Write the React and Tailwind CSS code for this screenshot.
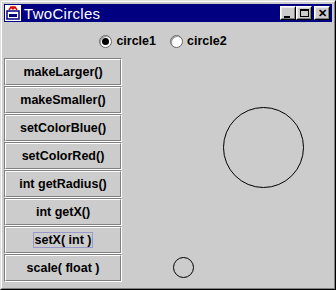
import React from "react";

const labels = [
  "makeLarger()",
  "makeSmaller()",
  "setColorBlue()",
  "setColorRed()",
  "int getRadius()",
  "int getX()",
  "setX( int )",
  "scale( float )",
];

// classic raised bevel, used for the title bar buttons
function Bevel({ children, className = "" }) {
  return (
    <div className={`border border-t-white border-l-white border-r-black border-b-black ${className}`}>
      <div className="h-full w-full border border-t-[#e8e8e8] border-l-[#e8e8e8] border-r-[#808080] border-b-[#808080] bg-[#cccccc] flex items-center justify-center">
        {children}
      </div>
    </div>
  );
}

// etched border like the Swing buttons
function Etched({ children, className = "" }) {
  return (
    <div className={`border border-t-[#808080] border-l-[#808080] border-r-white border-b-white ${className}`}>
      <div className="h-full w-full border border-t-white border-l-white border-r-[#808080] border-b-[#808080] bg-[#cccccc] flex items-center justify-center">
        {children}
      </div>
    </div>
  );
}

function Radio({ on, label }) {
  return (
    <div className="flex items-center gap-[4px]">
      <div className="w-[13px] h-[13px] rounded-full border border-[#666] bg-white flex items-center justify-center shadow-[inset_1px_1px_0_#999]">
        {on && <div className="w-[7px] h-[7px] rounded-full bg-black" />}
      </div>
      <span className="text-[12.5px] font-bold text-black">{label}</span>
    </div>
  );
}

export default function App() {
  return (
    <div
      className="w-[336px] h-[290px] bg-[#cccccc] border-t border-l border-t-[#e0e0e0] border-l-[#e0e0e0] border-r border-b border-r-black border-b-black"
      style={{ fontFamily: '"Liberation Sans", Arial, sans-serif' }}
    >
      <div className="h-full w-full border border-t-white border-l-white border-r-[#808080] border-b-[#808080] p-[2px] flex flex-col">
        {/* title bar */}
        <div className="h-[18px] bg-[#000080] flex items-center pl-[1px] pr-[2px] shrink-0">
          <svg width="16" height="16" viewBox="0 0 16 16" className="shrink-0">
            <rect x="0" y="0" width="16" height="16" fill="#ffffff" />
            <rect x="2" y="6" width="12" height="8" fill="none" stroke="#000080" strokeWidth="1.5" />
            <rect x="4" y="9" width="8" height="3" fill="#000080" />
            <path d="M4 5 L6 2 L8 4 L10 2 L12 5" fill="none" stroke="#e00000" strokeWidth="1.5" />
            <circle cx="8" cy="2.5" r="1.5" fill="#e00000" />
          </svg>
          <span className="ml-[3px] text-white text-[15px] leading-none tracking-[0.3px]">TwoCircles</span>
          <div className="ml-auto flex items-center">
            <Bevel className="w-[16px] h-[14px]">
              <div className="w-[6px] h-[2px] bg-black mt-[7px] mr-[2px]" />
            </Bevel>
            <Bevel className="w-[16px] h-[14px]">
              <div className="w-[9px] h-[8px] border border-black border-t-2" />
            </Bevel>
            <Bevel className="w-[16px] h-[14px] ml-[2px]">
              <span className="text-[11px] font-bold leading-none text-black">✕</span>
            </Bevel>
          </div>
        </div>

        {/* radio row */}
        <div className="h-[36px] flex items-center justify-center gap-[14px] pr-[10px] shrink-0 pt-[2px]">
          <Radio on label="circle1" />
          <Radio label="circle2" />
        </div>

        {/* main */}
        <div className="flex flex-1">
          <div className="w-[118px] flex flex-col">
            {labels.map((l) => (
              <Etched key={l} className="h-[28px]">
                {l === "setX( int )" ? (
                  <span className="text-[12.5px] font-bold text-black border border-[#9999cc] px-[1px] leading-[14px]">{l}</span>
                ) : (
                  <span className="text-[12.5px] font-bold text-black">{l}</span>
                )}
              </Etched>
            ))}
          </div>
          <div className="relative flex-1">
            <div className="absolute left-[101px] top-[49px] w-[81px] h-[81px] rounded-full border border-black" />
            <div className="absolute left-[51px] top-[199px] w-[21px] h-[21px] rounded-full border border-black" />
          </div>
        </div>
      </div>
    </div>
  );
}
